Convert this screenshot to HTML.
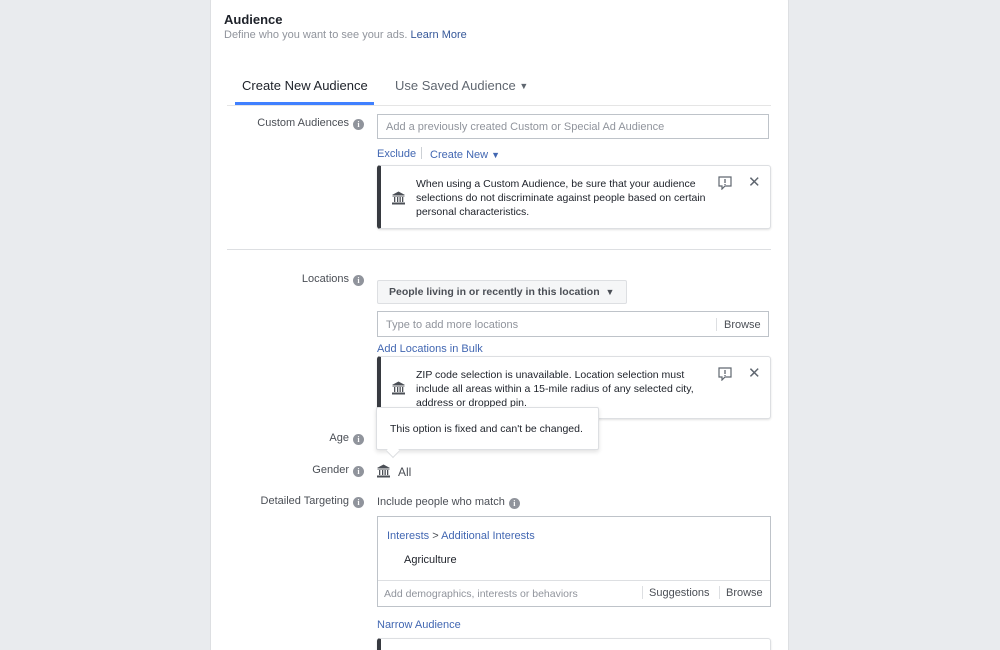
<!DOCTYPE html>
<html><head><meta charset="utf-8"><style>
*{box-sizing:border-box;margin:0;padding:0}
html,body{width:1000px;height:650px;overflow:hidden}
body{background:#e9ebee;font-family:"Liberation Sans",Arial,sans-serif;position:relative;color:#1d2129}
.card{position:absolute;left:210px;top:-2px;width:579px;height:660px;background:#fff;border:1px solid #dddfe2;border-radius:3px}
.a{position:absolute;white-space:nowrap}
.lbl{position:absolute;right:636px;font-size:11px;color:#4b4f56;text-align:right;white-space:nowrap}
.i{display:inline-block;width:11px;height:11px;border-radius:50%;background:#90949c;color:#fff;font-size:8px;line-height:11px;text-align:center;font-weight:bold;vertical-align:-1px;margin-left:4px;font-family:"Liberation Serif",serif}
.inp{position:absolute;border:1px solid #bec3c9;background:#fff;font-size:11px;color:#90949c}
.blue{color:#4267b2}
.note{position:absolute;left:377px;width:394px;border:1px solid #dddfe2;border-left:4px solid #373a40;border-radius:3px;background:#fff;box-shadow:0 1px 2px rgba(0,0,0,.12)}
.note .t{position:absolute;left:35px;top:11px;font-size:10.5px;line-height:14px;color:#1d2129;white-space:nowrap}
.bank{position:absolute;width:15px;height:14px}
.x{position:absolute;font-size:15px;color:#606770;line-height:14px}
</style></head><body>
<div class="card"></div>
<div class="a" style="left:224px;top:12px;font-size:13px;font-weight:bold;color:#1d2129">Audience</div>
<div class="a" style="left:224px;top:29px;font-size:11px;color:#90949c">Define who you want to see your ads. <span style="color:#365899">Learn More</span></div>

<div class="a" style="left:242px;top:78px;font-size:13px;color:#1d2129">Create New Audience</div>
<div class="a" style="left:395px;top:78px;font-size:13px;color:#606770">Use Saved Audience <span style="font-size:9px;vertical-align:1px">&#9660;</span></div>
<div class="a" style="left:227px;top:105px;width:544px;height:1px;background:#e5e5e5"></div>
<div class="a" style="left:235px;top:102px;width:139px;height:3px;background:#4080ff"></div>

<div class="lbl" style="top:117px">Custom Audiences<span class="i">i</span></div>
<div class="inp" style="left:377px;top:114px;width:392px;height:25px;padding:6px 8px">Add a previously created Custom or Special Ad Audience</div>
<div class="a blue" style="left:377px;top:148px;font-size:11px">Exclude</div>
<div class="a" style="left:421px;top:147px;width:1px;height:12px;background:#ccd0d5"></div>
<div class="a" style="left:430px;top:149px;font-size:11px;color:#4267b2">Create New <span style="font-size:9px">&#9660;</span></div>

<div class="note" style="top:165px;height:64px">
 <svg class="bank" style="left:10px;top:25px" viewBox="0 0 15 14"><path d="M7.5 0.5L1 4h13z M1.5 4.5h12v1h-12z M3 6v5h1.3V6z M6 6v5h1.3V6z M8.5 6v5h1.3V6z M11 6v5h1.3V6z M1 11.5h13v2H1z" fill="#4b4f56"/></svg>
 <div class="t">When using a Custom Audience, be sure that your audience<br>selections do not discriminate against people based on certain<br>personal characteristics.</div>
 <svg style="position:absolute;left:337px;top:10px" width="14" height="14" viewBox="0 0 14 14"><path d="M1 1h12v9H7l-3 3v-3H1z" fill="none" stroke="#606770" stroke-width="1.2"/><path d="M7 3v4M7 8v1" stroke="#606770" stroke-width="1.3"/></svg>
 <div class="x" style="left:367px;top:10px">&#10005;</div>
</div>

<div class="a" style="left:227px;top:249px;width:544px;height:1px;background:#dddfe2"></div>

<div class="lbl" style="top:273px">Locations<span class="i">i</span></div>
<div class="a" style="left:377px;top:280px;width:250px;height:24px;background:#f5f6f7;border:1px solid #dddfe2;border-radius:2px;font-size:10.5px;font-weight:bold;color:#4b4f56;padding:5px 11px">People living in or recently in this location <span style="font-size:9px;margin-left:3px">&#9660;</span></div>
<div class="inp" style="left:377px;top:311px;width:392px;height:26px;padding:7px 8px">Type to add more locations</div>
<div class="a" style="left:716px;top:318px;width:1px;height:13px;background:#dddfe2"></div>
<div class="a" style="left:724px;top:319px;font-size:11px;color:#4b4f56">Browse</div>
<div class="a blue" style="left:377px;top:343px;font-size:11px">Add Locations in Bulk</div>

<div class="note" style="top:356px;height:63px">
 <svg class="bank" style="left:10px;top:24px" viewBox="0 0 15 14"><path d="M7.5 0.5L1 4h13z M1.5 4.5h12v1h-12z M3 6v5h1.3V6z M6 6v5h1.3V6z M8.5 6v5h1.3V6z M11 6v5h1.3V6z M1 11.5h13v2H1z" fill="#4b4f56"/></svg>
 <div class="t">ZIP code selection is unavailable. Location selection must<br>include all areas within a 15-mile radius of any selected city,<br>address or dropped pin.</div>
 <svg style="position:absolute;left:337px;top:10px" width="14" height="14" viewBox="0 0 14 14"><path d="M1 1h12v9H7l-3 3v-3H1z" fill="none" stroke="#606770" stroke-width="1.2"/><path d="M7 3v4M7 8v1" stroke="#606770" stroke-width="1.3"/></svg>
 <div class="x" style="left:367px;top:10px">&#10005;</div>
</div>

<div class="a" style="left:376px;top:407px;width:223px;height:43px;background:#fff;border:1px solid #dddfe2;border-radius:2px;box-shadow:0 2px 4px rgba(0,0,0,.12);font-size:10.5px;color:#1d2129;padding:15px 13px">This option is fixed and can't be changed.</div>
<div class="a" style="left:388px;top:446px;width:10px;height:10px;background:#fff;transform:rotate(45deg);border-right:1px solid #dddfe2;border-bottom:1px solid #dddfe2"></div>

<div class="lbl" style="top:432px">Age<span class="i">i</span></div>
<div class="lbl" style="top:464px">Gender<span class="i">i</span></div>
<svg style="position:absolute;left:376px;top:464px" width="15" height="14" viewBox="0 0 15 14"><path d="M7.5 0.5L1 4h13z M1.5 4.5h12v1h-12z M3 6v5h1.3V6z M6 6v5h1.3V6z M8.5 6v5h1.3V6z M11 6v5h1.3V6z M1 11.5h13v2H1z" fill="#4b4f56"/></svg>
<div class="a" style="left:398px;top:465px;font-size:12px;color:#4b4f56">All</div>

<div class="lbl" style="top:495px">Detailed Targeting<span class="i">i</span></div>
<div class="a" style="left:377px;top:496px;font-size:11px;color:#4b4f56">Include people who match<span class="i">i</span></div>
<div class="a" style="left:377px;top:516px;width:394px;height:91px;border:1px solid #bec3c9;background:#fff"></div>
<div class="a" style="left:378px;top:580px;width:392px;height:1px;background:#dddfe2"></div>
<div class="a" style="left:387px;top:530px;font-size:11px;color:#4267b2">Interests <span style="color:#4b4f56">&gt;</span> Additional Interests</div>
<div class="a" style="left:404px;top:554px;font-size:11px;color:#1d2129">Agriculture</div>
<div class="a" style="left:384px;top:588px;font-size:10.5px;color:#90949c">Add demographics, interests or behaviors</div>
<div class="a" style="left:642px;top:586px;width:1px;height:13px;background:#dddfe2"></div>
<div class="a" style="left:649px;top:587px;font-size:11px;color:#4b4f56">Suggestions</div>
<div class="a" style="left:719px;top:586px;width:1px;height:13px;background:#dddfe2"></div>
<div class="a" style="left:726px;top:587px;font-size:11px;color:#4b4f56">Browse</div>
<div class="a blue" style="left:377px;top:619px;font-size:11px">Narrow Audience</div>
<div class="note" style="top:638px;height:40px"></div>
</body></html>
